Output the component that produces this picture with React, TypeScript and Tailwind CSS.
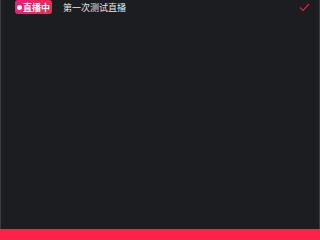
import React from "react";

function Badge() {
  return (
    <div className="flex items-center h-[14px] pl-[2px] pr-[2px] gap-[1px] rounded-[3px] bg-gradient-to-r from-[#ee1d78] to-[#f32a4e]">
      <span className="w-[5px] h-[5px] rounded-full bg-white" />
      <span className="text-[9px] leading-none font-bold text-white">直播中</span>
    </div>
  );
}

function CheckIcon() {
  return (
    <svg width="11" height="9" viewBox="0 0 11 9" fill="none">
      <path d="M1 4.5 L4 7.5 L10 1" stroke="#d8224a" strokeWidth="1.2" />
    </svg>
  );
}

export default function App() {
  return (
    <div
      className="w-[320px] h-[240px] flex flex-col bg-[#1c1d21] border-l border-r border-[#3a3b3f]"
      style={{ fontFamily: '"Noto Sans CJK SC", "Noto Sans", sans-serif' }}
    >
      <div className="flex items-center h-[14px] pl-[14px] pr-[9px]">
        <Badge />
        <span className="ml-[11px] text-[9px] leading-none text-[#e6e6e6]">第一次测试直播</span>
        <div className="ml-auto">
          <CheckIcon />
        </div>
      </div>
      <div className="flex-1" />
      <div className="h-[11px] bg-[#fd2248] -mx-px" />
    </div>
  );
}
